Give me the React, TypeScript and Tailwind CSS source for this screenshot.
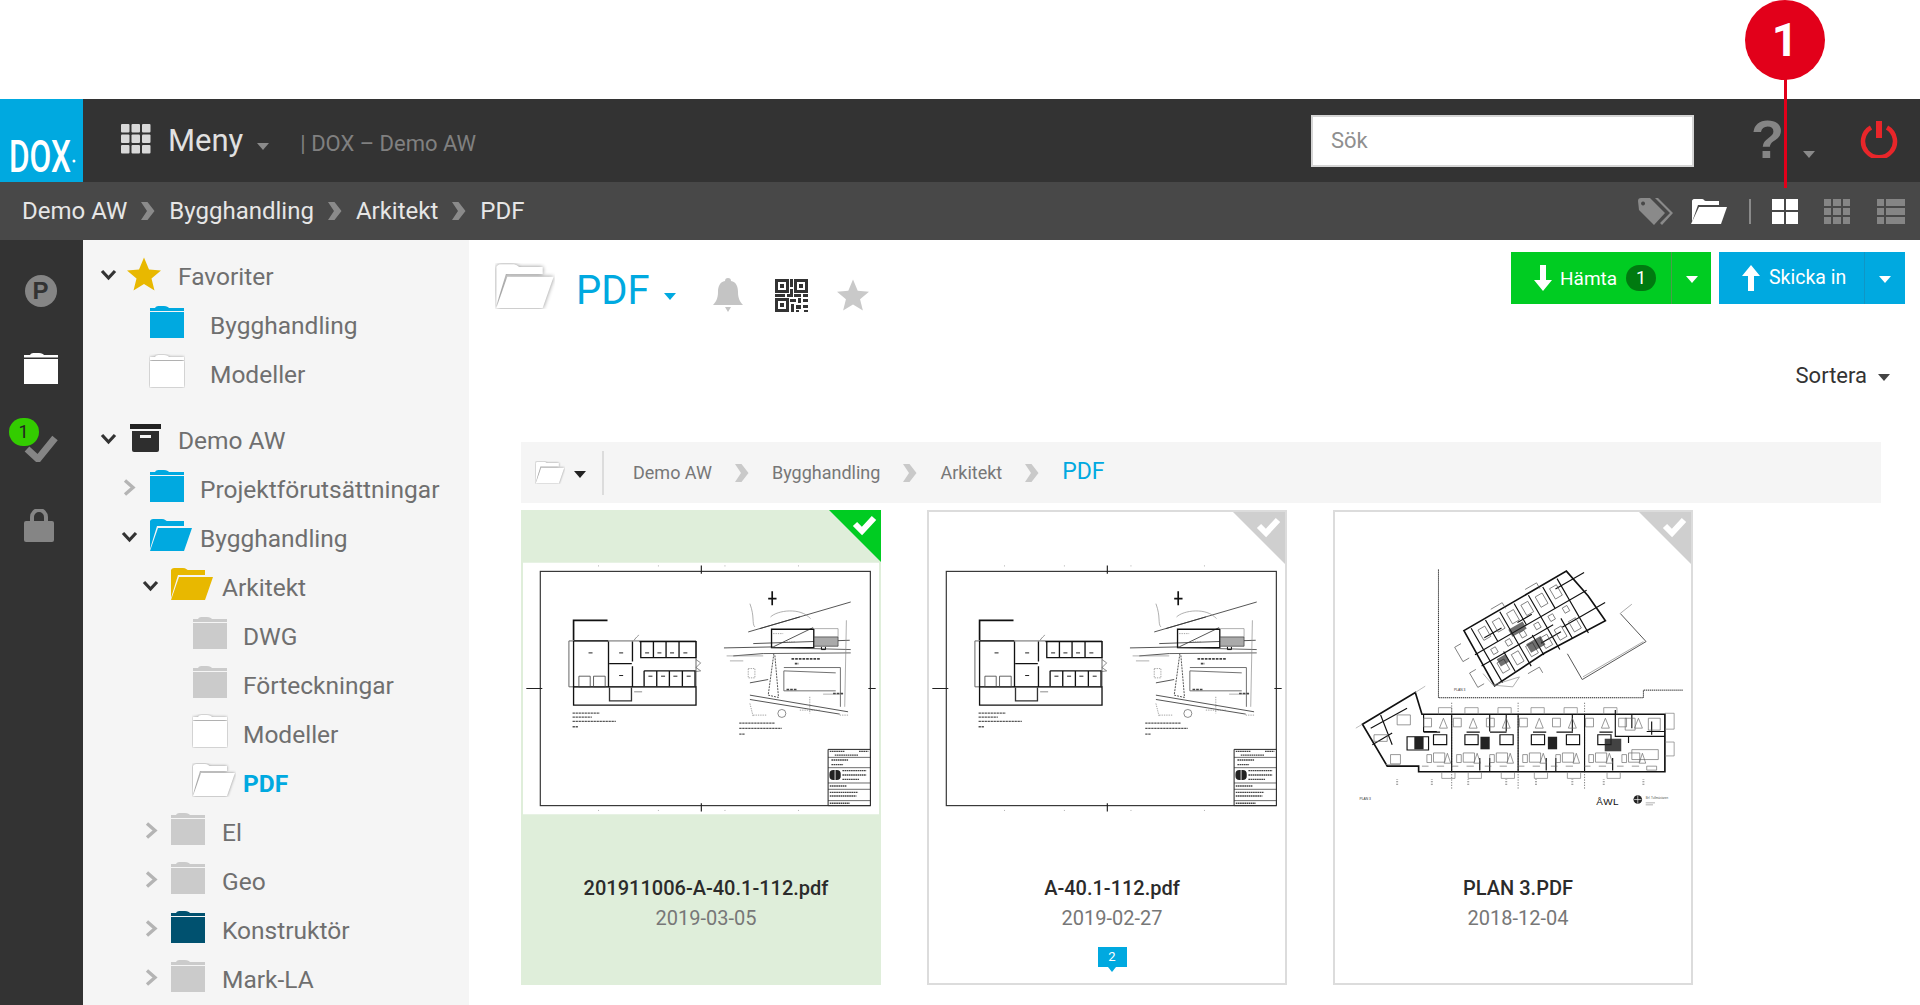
import React from "react";

const font = "font-['Roboto',sans-serif]";

const Caret = ({ color = "#8a8a8a", w = 12 }: { color?: string; w?: number }) => (
  <svg width={w} height={w / 2 + 1} viewBox="0 0 12 7">
    <path d="M0 0h12L6 7z" fill={color} />
  </svg>
);

const Folder = ({ color, shadow }: { color: string; shadow?: boolean }) => (
  <svg width="36" height="34" viewBox="0 0 36 34" className="mb-[10px] -mx-px shrink-0">
    <g style={shadow ? { filter: "drop-shadow(0 0 1.500px #999)" } : undefined}>
      <path d="M6 3c1-2 3-2 5-2h4c3 0 4 1 5 2h15v3H1V3z" fill={color} />
      <rect x="1" y="7" width="34" height="26" fill={color} />
    </g>
  </svg>
);

const OpenFolder = ({ color, shadow, w = 44 }: { color: string; shadow?: boolean; w?: number }) => (
  <svg width={w} height={(w * 34) / 44} viewBox="0 0 44 34" className="mb-[10px] -mx-px shrink-0">
    <g style={shadow ? { filter: "drop-shadow(0 0 1.500px #888)" } : undefined}>
      <path d="M1 31V3c1-2 3-2 4-2h8c3 0 4 2 5 2h17v5H8z" fill={color} />
      <path d="M9 10h34l-8 23H1z" fill={color} />
    </g>
  </svg>
);

const Star = ({ size, color }: { size: number; color: string }) => (
  <svg width={size} height={size} viewBox="0 0 34 33" className="shrink-0">
    <path d="M17 0l5 12 12 1-9.500 8 3 12L17 26.500 6.500 33l3-12L0 13l12-1z" fill={color} />
  </svg>
);

const Chevron = ({ open }: { open?: boolean }) =>
  open ? (
    <svg width="17" height="12" viewBox="0 0 17 12" className="mb-[6px]">
      <path d="M2 2l6.500 7L15 2" fill="none" stroke="#333" strokeWidth="3.200" />
    </svg>
  ) : (
    <svg width="13" height="17" viewBox="0 0 13 17" className="mb-[6px]">
      <path d="M2 1.500l8 7-8 7" fill="none" stroke="#b4b4b4" strokeWidth="3.400" />
    </svg>
  );

const CrumbChevron = ({ color }: { color: string }) => (
  <svg width="14" height="18" viewBox="0 0 14 18">
    <path d="M0 0h6.500l7 9-7 9H0l6-9z" fill={color} />
  </svg>
);

type RowProps = {
  pad: string;
  slot?: string;
  chev?: "open" | "closed";
  icon: React.ReactNode;
  gap: string;
  label: string;
  active?: boolean;
};

const Row = ({ pad, slot, chev, icon, gap, label, active }: RowProps) => (
  <div className={`flex items-center h-[49px] ${pad}`}>
    {chev && (
      <div className={`${slot} shrink-0`}>
        <Chevron open={chev === "open"} />
      </div>
    )}
    {icon}
    <span className={`${gap} text-[24.500px] whitespace-nowrap leading-none ${active ? "text-[#00a9e0] font-bold" : "text-[#6f6f6f]"}`}>
      {label}
    </span>
  </div>
);

const Tree = () => (
  <div className="w-[386px] bg-[#f5f5f5] pt-[13px] shrink-0">
    <Row pad="pl-[17px]" slot="w-[27px]" chev="open" gap="ml-[17px]" label="Favoriter" icon={<span className="mb-[8px]"><Star size={34} color="#e8b800" /></span>} />
    <Row pad="pl-[67px]" gap="ml-[26px]" label="Bygghandling" icon={<Folder color="#00a9e0" />} />
    <Row pad="pl-[67px]" gap="ml-[26px]" label="Modeller" icon={<Folder color="#ffffff" shadow />} />
    <div className="h-[17px]" />
    <Row
      pad="pl-[17px]"
      slot="w-[30px]"
      chev="open"
      gap="ml-[17px]"
      label="Demo AW"
      icon={
        <svg width="31" height="28" viewBox="0 0 31 28" className="mb-[8px] shrink-0">
          <path d="M0 0h31v5H0z" fill="#222" />
          <path d="M2 7h27v19a2 2 0 0 1-2 2H4a2 2 0 0 1-2-2z" fill="#2e2e2e" />
          <path d="M10 11h11v3H10z" fill="#f5f5f5" />
        </svg>
      }
    />
    <Row pad="pl-[40px]" slot="w-[27px]" chev="closed" gap="ml-[16px]" label="Projektförutsättningar" icon={<Folder color="#00a9e0" />} />
    <Row pad="pl-[38px]" slot="w-[29px]" chev="open" gap="ml-[8px]" label="Bygghandling" icon={<OpenFolder color="#00a9e0" />} />
    <Row pad="pl-[59px]" slot="w-[29px]" chev="open" gap="ml-[9px]" label="Arkitekt" icon={<OpenFolder color="#e8b800" />} />
    <Row pad="pl-[110px]" gap="ml-[16px]" label="DWG" icon={<Folder color="#cbcbcb" />} />
    <Row pad="pl-[110px]" gap="ml-[16px]" label="Förteckningar" icon={<Folder color="#cbcbcb" />} />
    <Row pad="pl-[110px]" gap="ml-[16px]" label="Modeller" icon={<Folder color="#ffffff" shadow />} />
    <Row pad="pl-[110px]" gap="ml-[8px]" label="PDF" active icon={<OpenFolder color="#ffffff" shadow />} />
    <Row pad="pl-[62px]" slot="w-[26px]" chev="closed" gap="ml-[17px]" label="El" icon={<Folder color="#cbcbcb" />} />
    <Row pad="pl-[62px]" slot="w-[26px]" chev="closed" gap="ml-[17px]" label="Geo" icon={<Folder color="#cbcbcb" />} />
    <Row pad="pl-[62px]" slot="w-[26px]" chev="closed" gap="ml-[17px]" label="Konstruktör" icon={<Folder color="#00516f" />} />
    <Row pad="pl-[62px]" slot="w-[26px]" chev="closed" gap="ml-[17px]" label="Mark-LA" icon={<Folder color="#cbcbcb" />} />
  </div>
);

const Rail = () => (
  <div className="w-[83px] bg-[#333333] shrink-0 flex flex-col items-center pt-[35px] pr-[2px]">
    <div className="w-8 h-8 rounded-full bg-[#858585] flex items-center justify-center text-[#333333] font-bold text-[24px] leading-none font-['Liberation_Sans',sans-serif]">
      P
    </div>
    <div className="mt-[45px] h-8">
      <svg width="34" height="32" viewBox="0 0 34 32">
        <path d="M6 3c1-2 3-2 5-2h4c3 0 4 1 5 2h14v2.500H0V3z" fill="#fff" />
        <rect y="7" width="34" height="25" fill="#fff" />
      </svg>
    </div>
    <div className="relative mt-[50px] h-[28px] w-[34px]">
      <svg width="34" height="28" viewBox="0 0 34 28">
        <path d="M3 15l11 10L31 4" fill="none" stroke="#858585" strokeWidth="7" />
      </svg>
      <div className="absolute -left-[15px] -top-[16px] w-[30px] h-[28px] rounded-full bg-[#33cc00] text-[#222] text-[18px] leading-[28px] text-center">
        1
      </div>
    </div>
    <div className="mt-[47px] -ml-[3px]">
      <svg width="30" height="33" viewBox="0 0 30 33">
        <path d="M8 13V8a7 7 0 0 1 14 0v5" fill="none" stroke="#858585" strokeWidth="4" />
        <rect y="12" width="30" height="21" rx="2" fill="#858585" />
      </svg>
    </div>
  </div>
);

const Qr = () => (
  <svg width="33" height="33" viewBox="0 0 33 33" className="shrink-0">
    <g fill="#333">
      <path fillRule="evenodd" d="M0 0h14v14H0zM3 3v8h8V3z" />
      <rect x="5" y="5" width="4" height="4" />
      <path fillRule="evenodd" d="M19 0h14v14H19zM22 3v8h8V3z" />
      <rect x="24" y="5" width="4" height="4" />
      <path fillRule="evenodd" d="M0 19h14v14H0zM3 22v8h8v-8z" />
      <rect x="5" y="24" width="4" height="4" />
      <path d="M15 0h3v8h-3zM15 10h3v8h-3zM0 15h10v3H0zM12 15h3v3h-3zM19 15h7v3h-7zM28 15h5v3h-5zM15 20h6v3h-6zM23 19h3v5h-3zM28 20h5v3h-5zM16 25h3v8h-3zM21 26h5v4h-5zM28 26h5v3h-5zM21 31h3v2h-3zM29 31h4v2h-4z" />
    </g>
  </svg>
);

const PlanA = () => {
  const thick = "#111";
  return (
    <svg viewBox="8 67 1070 756" className="block w-full h-full" fill="none">
      <rect x="8" y="67" width="1070" height="756" fill="#fff" />
      <rect x="60" y="93" width="992" height="704" stroke="#333" strokeWidth="3.500" />
      <path d="M544 75v25M544 790v25M18 445h48M1046 445h22" stroke="#222" strokeWidth="3.500" />
      <path d="M160 300v-60h102" stroke={thick} strokeWidth="5" />
      <path d="M146 302h382v138H146z" stroke="#666" strokeWidth="3" />
      <path d="M160 302h104M160 302v138M160 440h368v55H160v-55M265 304v136M337 304v60M337 378v62" stroke={thick} strokeWidth="4" />
      <path d="M267 370h68M358 304h170v48H362v-46M400 304v48M438 304v48M477 304v48M372 392h153v46M372 392v46M410 392v46M448 392v46M487 392v46" stroke={thick} strokeWidth="4" />
      <path d="M176 408h34v32h-34zM220 408h35v32h-35z" stroke="#444" strokeWidth="2.500" />
      <path d="M268 442v40h66v-40" stroke="#333" strokeWidth="4" />
      <path d="M528 358l14 10-14 14 14 10-14 2M342 300c8-12 14-14 14-16M342 455h24" stroke="#555" strokeWidth="2" />
      <path d="M205 338h12M297 338h12M297 406h12M375 338h12M412 338h12M450 338h12M490 338h12M385 408h12M423 408h12M460 408h12M500 408h12" stroke="#222" strokeWidth="3" />
      <path d="M157 519h82M157 531h58M157 544h130M157 560h16" stroke="#555" strokeWidth="4" strokeDasharray="7 2" />
      <path d="M658 549h106M658 565h128M658 582h16" stroke="#555" strokeWidth="4" strokeDasharray="7 2" />
      <path d="M757 153v42M745 175h25" stroke="#111" strokeWidth="5" />
      <path d="M685 275L993 185M720 265L840 230M612 323L760 320L880 262M640 347L730 340M690 465L985 515M690 478L960 522M700 310L990 300M690 428L745 418" stroke="#333" strokeWidth="2.500" />
      <path d="M755 267h127v55H755z" stroke="#111" strokeWidth="4" />
      <path d="M755 322L993 328M730 340L993 338" stroke="#444" strokeWidth="2.500" />
      <path d="M883 290h72v28h-72z" fill="#aaa" stroke="#333" strokeWidth="2" />
      <path d="M905 320v8h12v-8" stroke="#111" strokeWidth="3" />
      <path d="M762 340L745 465L776 472L765 345" stroke="#555" strokeWidth="3" strokeDasharray="6 3" />
      <path d="M792 392L948 398M792 392V452H948M792 382H962V500" stroke="#555" strokeWidth="2.500" />
      <path d="M690 190c15 40 5 60 15 70M752 230c20-20 90-30 120 5M910 462h60M980 240L975 500M885 265h70v25M620 347h110M630 362h40" stroke="#888" strokeWidth="2" />
      <circle cx="786" cy="520" r="12" stroke="#555" strokeWidth="2" />
      <path d="M685 385h20v28h-20zM700 525h40M840 510h60M960 525h25M690 490l10 40M870 470v50M760 280h30M800 305h25" stroke="#777" strokeWidth="2" strokeDasharray="4 3" />
      <path d="M815 356h88M825 370h12M800 448h30M940 460h30" stroke="#444" strokeWidth="5" strokeDasharray="8 3" />
      <path d="M925 628h127v169H925z" fill="#fff" stroke="#222" strokeWidth="3" />
      <path d="M925 652h127M925 683h127M925 729h127M925 748h127M925 782h127" stroke="#222" strokeWidth="2" />
      <path d="M930 634h45M1018 634h28M945 645h70M935 660h50M935 674h35M968 692h72M968 705h72M968 718h50M930 738h50M930 757h85M930 768h80M930 790h60" stroke="#444" strokeWidth="4" strokeDasharray="5 1.500" />
      <rect x="929" y="690" width="34" height="30" rx="12" fill="#222" />
      <path d="M946 688v34" stroke="#fff" strokeWidth="2.500" />
      <path d="M235 75v3M415 75v3M615 75v3M836 75v3M235 810v3M415 810v3M615 810v3M836 810v3" stroke="#888" strokeWidth="2" />
    </svg>
  );
};

const PlanB = () => {
  const units = [395, 596, 797];
  const bays = [355, 435, 535, 635, 735, 855];
  const details = [300, 390, 490, 590, 690, 790, 890];
  return (
    <svg viewBox="42 30 1077 930" className="block w-full h-full" fill="none">
      <path d="M355 200V588H975V565H1095" stroke="#222" strokeWidth="3" strokeDasharray="4 2" />
      <path d="M905 333L983 418L790 533L745 455" stroke="#555" strokeWidth="3" />
      <path d="M792 525L975 418M905 333L940 305" stroke="#aaa" strokeWidth="3" />
      <path d="M432 385L742 205L808 280L860 355L672 455L525 552Z" stroke="#111" strokeWidth="5" />
      <g transform="rotate(-30 640 380)">
        <g stroke="#111" strokeWidth="3.500">
          {[480, 530, 580, 630, 680, 730, 780].map((x) => (
            <path key={x} d={`M${x} 285v${x % 100 === 80 ? 190 : 75}M${x} 395v70`} />
          ))}
          <path d="M450 360H840M450 400H700M760 310H860M720 420H870M500 330h60M610 340h50M640 430h70" />
        </g>
        <g stroke="#555" strokeWidth="2">
          {[495, 545, 595, 645, 695, 745].map((x) => (
            <path key={x} d={`M${x} 300h24v36h-24zM${x} 415h24v36h-24zM${x + 4} 370h16v18h-16z`} />
          ))}
          <path d="M430 310h-22v50h22M430 400h-22v50h22M560 265h40v20M680 265h40v20M560 490h40v20" />
        </g>
        <path d="M575 345h50v25h-50zM600 410h50v30h-50zM500 405h30v25h-30z" fill="#222" opacity=".65" />
      </g>
      <path d="M520 550L600 525L580 555ZM490 515l30 35" stroke="#888" strokeWidth="2" />
      <text x="402" y="568" className="font-['Liberation_Sans',sans-serif]" fontSize="10" fill="#333">PLAN 3</text>
      <path d="M125 668L285 572L305 638H1040V812H295V795H200Z" stroke="#111" strokeWidth="5" />
      <path d="M105 680L125 668M285 572L315 553M195 790L240 790" stroke="#999" strokeWidth="2" />
      <path d="M395 603V865M596 603V865M797 603V865" stroke="#444" strokeWidth="2" strokeDasharray="4 4" />
      <g stroke="#777" strokeWidth="2">
        {bays.map((x) => (
          <path key={x} d={`M${x} 638v-20h40v20M${x + 10} 812v20h40v-20`} />
        ))}
        <path d="M1040 635h28v48h-28M1040 722h28v42h-28" />
      </g>
      <g stroke="#111" strokeWidth="3.500">
        {units.map((x) => (
          <path key={x} d={`M${x} 638v172M${x - 85} 692h50M${x + 45} 692h40M${x - 55} 700h40v30h-40zM${x + 40} 700h40v30h-40zM${x + 85} 770v38`} />
        ))}
        <path d="M310 640v50h40M890 625v80h150M930 705v20M180 640l35 90M150 680l110-60M155 730l60-35M260 706h65v40h-65zM510 640v50M560 640v50M760 640v50M710 770v40M510 770v40M940 640v40M1000 660v40M985 690h55" />
      </g>
      <g fill="#222">
        <rect x="282" y="706" width="28" height="38" />
        <rect x="482" y="706" width="28" height="38" />
        <rect x="686" y="706" width="28" height="38" />
        <rect x="858" y="712" width="50" height="38" opacity=".85" />
      </g>
      <g stroke="#666" strokeWidth="2">
        {details.map((x) => (
          <path key={x} d={`M${x + 40} 755h34v28h-34zM${x + 20} 760h14v24h-14zM${x + 82} 756l10 30h-20zM${x + 70} 650l12 30h-24zM${x + 10} 650h24v26h-24zM${x + 5} 795h20M${x + 50} 795h22`} />
        ))}
        <path d="M920 650h30v36h-30zM990 650h36v36h-36zM940 745h80v30h-80zM985 795h30v12h-30zM210 760h30v28h-30zM160 700h40v20h-40zM230 640h40v30h-40z" />
      </g>
      <path d="M230 835v20M335 835v20M445 835v20M560 835v20M650 835v20M760 835v20M855 835v20M975 835v20" stroke="#888" strokeWidth="6" strokeDasharray="2 3" />
      <text x="116" y="896" className="font-['Liberation_Sans',sans-serif]" fontSize="10" fill="#333">PLAN 3</text>
      <text x="832" y="912" className="font-['Liberation_Sans',sans-serif]" fontSize="30" fill="#111" letterSpacing="1.500">ÅWL</text>
      <circle cx="958" cy="896" r="13" fill="#222" />
      <path d="M958 884v24M947 896h22" stroke="#fff" strokeWidth="2" />
      <text x="982" y="893" className="font-['Liberation_Sans',sans-serif]" fontSize="9" fill="#555">Brf. Tullmästaren</text>
      <path d="M982 906h28M982 912h22" stroke="#888" strokeWidth="2" />
    </svg>
  );
};

const Corner = ({ color }: { color: string }) => (
  <svg width="52" height="52" viewBox="0 0 52 52" className="absolute top-0 right-0">
    <path d="M0 0h52v52z" fill={color} />
    <path d="M26 14l7 7L45 8" fill="none" stroke="#fff" strokeWidth="6" />
  </svg>
);

type CardProps = {
  name: string;
  date: string;
  selected?: boolean;
  tag?: string;
  children: React.ReactNode;
  top: string;
};

const Card = ({ name, date, selected, tag, children, top }: CardProps) => (
  <div className={`relative h-[475px] w-[360px] flex flex-col items-center overflow-hidden ${selected ? "bg-[#dfeeda]" : "bg-white border-2 border-[#dcdcdc]"}`}>
    <div className={top}>{children}</div>
    <Corner color={selected ? "#00cc22" : "#cfcfcf"} />
    <div className={`absolute inset-x-0 pl-[10px] flex flex-col items-center ${selected ? "top-[364px]" : "top-[362px]"}`}>
      <div className="text-[20px] font-medium leading-7 text-[#2b2b2b]">{name}</div>
      <div className="mt-[2px] text-[20px] leading-7 text-[#777777]">{date}</div>
      {tag && (
        <div className="relative mt-[15px] w-[29px] h-[20px] bg-[#00a9e0] text-white text-[13px] leading-[20px] text-center">
          {tag}
          <span className="absolute left-[10px] top-[20px] w-0 h-0 border-t-[5px] border-t-[#00a9e0] border-l-[4px] border-l-transparent border-r-[4px] border-r-transparent" />
        </div>
      )}
    </div>
  </div>
);

const TopBars = () => (
  <>
    <div className="h-[83px] bg-[#333333] flex items-center shrink-0">
      <div className="w-[83px] h-full bg-[#00a9e0] shrink-0">
        <svg width="83" height="83" viewBox="0 0 83 83">
          <text x="9" y="73" fontSize="44" fontWeight="500" fill="#fff" textLength="62" lengthAdjust="spacingAndGlyphs">DOX</text>
          <circle cx="74" cy="62" r="1.500" fill="#fff" />
        </svg>
      </div>
      <svg width="30" height="30" viewBox="0 0 30 30" className="ml-[38px] mb-1 shrink-0">
        <g fill="#d9d9d9">
          {[0, 10.500, 21].map((x) =>
            [0, 10.500, 21].map((y) => <rect key={`${x}-${y}`} x={x} y={y} width="8.500" height="8.500" rx="1" />)
          )}
        </g>
      </svg>
      <span className="ml-[17px] text-[31px] leading-none text-[#e0e0e0]">Meny</span>
      <span className="ml-[14px] mt-[12px]">
        <Caret color="#8a8a8a" />
      </span>
      <span className="ml-[31px] mt-[6px] text-[22px] text-[#808080] leading-none whitespace-nowrap">| DOX – Demo AW</span>
      <div className="ml-auto w-[383px] h-[52px] bg-white border-2 border-[#d5d5d5] flex items-center pl-[18px] text-[22px] text-[#8f8f8f]">
        Sök
      </div>
      <span className="ml-[57px] w-[30px] text-center text-[54px] leading-none font-bold text-[#858585] font-['Liberation_Sans',sans-serif] mb-1">?</span>
      <span className="ml-[22px] mt-[28px]">
        <Caret color="#8a8a8a" />
      </span>
      <svg width="38" height="38" viewBox="0 0 38 38" className="ml-[45px] mr-[22px] mb-1 shrink-0">
        <path d="M11 7.500a16 16 0 1 0 16 0" fill="none" stroke="#e8262a" strokeWidth="4.500" />
        <path d="M19 1v17" stroke="#e8262a" strokeWidth="6" />
      </svg>
    </div>
    <div className="h-[58px] bg-[#484848] flex items-center pl-[22px] pr-[15px] shrink-0">
      <span className="text-[24px] text-[#e6e6e6] leading-none">Demo AW</span>
      <span className="mx-[14px]"><CrumbChevron color="#8a8a8a" /></span>
      <span className="text-[24px] text-[#e6e6e6] leading-none">Bygghandling</span>
      <span className="mx-[14px]"><CrumbChevron color="#8a8a8a" /></span>
      <span className="text-[24px] text-[#e6e6e6] leading-none">Arkitekt</span>
      <span className="mx-[14px]"><CrumbChevron color="#8a8a8a" /></span>
      <span className="text-[24px] text-[#e6e6e6] leading-none">PDF</span>
      <svg width="36" height="30" viewBox="0 0 36 30" className="ml-auto shrink-0">
        <path d="M0 5a3 3 0 0 1 3-3h9l15 15-11 12L1 14zM5 5.500a2 2 0 1 0 .1 0z" fill="#8a8a8a" fillRule="evenodd" />
        <path d="M17 2h3l15 15-11 12-2-2 10-10z" fill="#8a8a8a" />
      </svg>
      <svg width="36" height="26" viewBox="0 0 36 26" className="ml-[17px] shrink-0">
        <path d="M1 24V3c0-1 1-2 2-2h8c2 0 2 2 4 2h13v4H7z" fill="#fff" />
        <path d="M8 9h28l-6 17H0z" fill="#fff" />
      </svg>
      <span className="ml-[22px] w-[2px] h-[25px] bg-[#8a8a8a]" />
      <div className="ml-[21px] w-[26px] h-[25px] grid grid-cols-2 gap-[2px]">
        <i className="bg-white" />
        <i className="bg-white" />
        <i className="bg-white" />
        <i className="bg-white" />
      </div>
      <div className="ml-[26px] w-[26px] h-[25px] grid grid-cols-3 gap-[2px]">
        {[0, 1, 2, 3, 4, 5, 6, 7, 8].map((i) => (
          <i key={i} className="bg-[#858585]" />
        ))}
      </div>
      <div className="ml-[27px] w-[28px] h-[25px] grid grid-cols-[7px_1fr] gap-[2px]">
        {[0, 1, 2, 3, 4, 5].map((i) => (
          <i key={i} className="bg-[#858585]" />
        ))}
      </div>
    </div>
  </>
);

const Main = () => (
  <div className="flex-1 min-w-0 bg-white relative">
    <div className="flex h-[202px] items-start pl-[27px] pr-[15px]">
      <div className="flex items-center pt-[23px]">
        <OpenFolder color="#ffffff" shadow w={60} />
        <span className="ml-[22px] text-[40px] leading-none text-[#00a9e0]">PDF</span>
        <span className="ml-[14px] mt-[10px]"><Caret color="#00a9e0" /></span>
        <svg width="30" height="34" viewBox="0 0 30 34" className="ml-[37px] mt-[8px] shrink-0">
          <path d="M15 0c2 0 3 1 3 3 5 1 7 5 7 11 0 6 2 10 5 13H0c3-3 5-7 5-13 0-6 2-10 7-11 0-2 1-3 3-3z" fill="#c4c4c4" />
          <path d="M12 29h6l-3 5z" fill="#c4c4c4" />
        </svg>
        <span className="ml-[32px] mt-[8px]"><Qr /></span>
        <span className="ml-[29px] mt-[8px]"><Star size={32} color="#c9c9c9" /></span>
      </div>
      <div className="ml-auto flex gap-2 pt-3">
        <div className="flex h-[52px] w-[200px] bg-[#00cc22] text-white items-center">
          <div className="flex items-center w-[161px] pl-[23px] h-full border-r border-[#4a9e4a]">
            <svg width="18" height="26" viewBox="0 0 18 26" className="shrink-0">
              <path d="M6 0h6v15h6l-9 11-9-11h6z" fill="#fff" />
            </svg>
            <span className="ml-[8px] text-[19px] leading-none">Hämta</span>
            <span className="ml-[9px] w-[30px] h-[26px] rounded-full bg-[#007a10] text-center text-[18px] leading-[26px]">1</span>
          </div>
          <span className="flex-1 flex justify-center mt-[2px]"><Caret color="#ffffff" /></span>
        </div>
        <div className="flex h-[52px] w-[186px] bg-[#00a9e0] text-white items-center">
          <div className="flex items-center w-[146px] pl-[23px] h-full border-r border-[#0f96c6]">
            <svg width="18" height="26" viewBox="0 0 18 26" className="shrink-0">
              <path d="M6 26h6V11h6L9 0 0 11h6z" fill="#fff" />
            </svg>
            <span className="ml-[9px] text-[19.500px] whitespace-nowrap leading-none">Skicka in</span>
          </div>
          <span className="flex-1 flex justify-center mt-[2px]"><Caret color="#ffffff" /></span>
        </div>
      </div>
    </div>
    <div className="absolute right-[30px] top-[122px] flex items-center">
      <span className="text-[22px] leading-7 text-[#333]">Sortera</span>
      <span className="ml-[11px] mt-[2px]"><Caret color="#444" /></span>
    </div>
    <div className="ml-[52px] mr-[39px] h-[61px] bg-[#f5f5f5] flex items-center text-[18px] text-[#777777]">
      <span className="ml-[15px] shrink-0 flex items-center pt-[10px]">
        <OpenFolder color="#ffffff" shadow w={30} />
      </span>
      <span className="ml-[10px] mt-[3px]"><Caret color="#222" /></span>
      <span className="ml-[16px] w-[2px] h-[44px] bg-[#dcdcdc]" />
      <span className="ml-[29px]">Demo AW</span>
      <span className="mx-[23px]"><CrumbChevron color="#c9c9c9" /></span>
      <span>Bygghandling</span>
      <span className="mx-[23px]"><CrumbChevron color="#c9c9c9" /></span>
      <span>Arkitekt</span>
      <span className="mx-[23px]"><CrumbChevron color="#c9c9c9" /></span>
      <span className="text-[#00a9e0] text-[23px]">PDF</span>
    </div>
    <div className="ml-[52px] mt-[7px] flex gap-[46px]">
      <Card name="201911006-A-40.1-112.pdf" date="2019-03-05" selected top="mt-[52px] w-[356px] h-[253px]">
        <PlanA />
      </Card>
      <Card name="A-40.1-112.pdf" date="2019-02-27" tag="2" top="mt-[50px] w-[356px] h-[253px]">
        <PlanA />
      </Card>
      <Card name="PLAN 3.PDF" date="2018-12-04" top="w-[356px] h-[310px]">
        <PlanB />
      </Card>
    </div>
  </div>
);

export default function App() {
  return (
    <div className={`relative w-[1920px] h-[1005px] overflow-hidden bg-white flex flex-col ${font}`}>
      <div className="h-[99px] shrink-0" />
      <TopBars />
      <div className="flex flex-1 min-h-0">
        <Rail />
        <Tree />
        <Main />
      </div>
      <div className="absolute left-[1745px] top-0 w-20 h-20 rounded-full bg-[#e2001a] text-white text-[46px] font-bold leading-[80px] text-center">
        1
      </div>
      <div className="absolute left-[1784px] top-[78px] w-[3px] h-[110px] bg-[#e2001a]" />
    </div>
  );
}
